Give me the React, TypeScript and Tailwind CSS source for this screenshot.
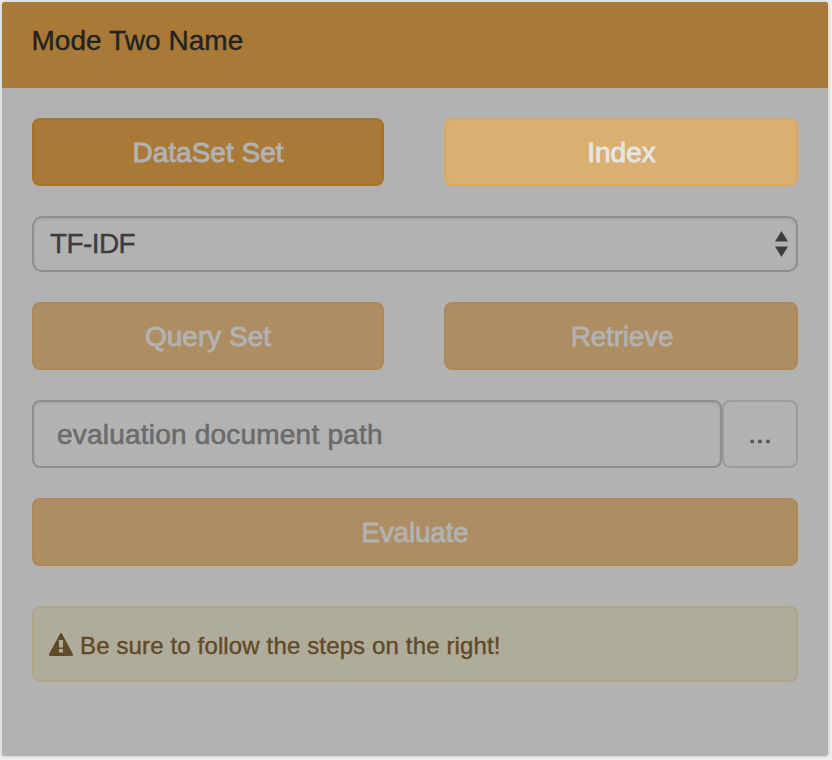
import React from "react";

type ButtonProps = { label: string; tone?: "solid" | "light" | "muted"; className?: string; labelClass?: string };

const tones = {
  solid: "bg-[#a97937] border-[#a87128] text-[#b2b2b2]",
  light: "bg-[#d9af72] border-[#dba861] text-[#e5e5e5]",
  muted: "bg-[#ad8d61] border-[#ac8957] text-[#b2b2b2]",
};

function ActionButton({ label, tone = "muted", className = "", labelClass = "" }: ButtonProps) {
  return (
    <button
      className={`flex h-[68px] items-center justify-center rounded-lg border-2 pt-0.5 text-[28px] leading-10 [-webkit-text-stroke:0.9px_currentColor] ${tones[tone]} ${className}`}
    >
      <span className={labelClass}>{label}</span>
    </button>
  );
}

export default function App() {
  return (
    <div className="h-[760px] w-[832px] bg-[#eeeeee] pt-0.5 pl-0.5 font-['Liberation_Sans',Arial,sans-serif]">
      <section className="h-[754px] w-[826px] rounded-[3px] bg-[#b2b2b2] shadow-[0_0_0_2px_#dfdfdf]">
        <header className="h-[86px] rounded-t-[3px] bg-[#a97937] px-[29.5px] pt-[19px] text-[28px] leading-10 text-[#232323]">
          <h1 className="tracking-[0.05px] [-webkit-text-stroke:0.4px_currentColor]">Mode Two Name</h1>
        </header>
        <div className="flex w-[826px] flex-col gap-[30px] pt-[30px] pr-[30px] pl-[30px]">
          <div className="flex justify-between">
            <ActionButton label="DataSet Set" tone="solid" className="w-[352px]" />
            <ActionButton label="Index" tone="light" className="w-[354px]" labelClass="pl-px" />
          </div>
          <div className="flex h-14 items-center justify-between rounded-[10px] border-2 border-[#8e8e8e] pr-2 pl-4 text-[28px] leading-10 text-[#3d3d3d] shadow-[inset_0_2px_3px_rgba(0,0,0,0.07)]">
            <span className="tracking-[-0.6px] [-webkit-text-stroke:0.4px_currentColor]">TF-IDF</span>
            <svg width="13" height="26" viewBox="0 0 13 26" fill="#3d3d3d">
              <path d="M6.5 0 13 10.5H0ZM0 15.5h13L6.5 26Z" />
            </svg>
          </div>
          <div className="flex justify-between">
            <ActionButton label="Query Set" className="w-[352px]" />
            <ActionButton label="Retrieve" className="w-[354px]" labelClass="pl-0.5 tracking-[-0.2px]" />
          </div>
          <div className="flex">
            <input
              placeholder="evaluation document path"
              className="h-[68px] w-[690px] rounded-lg border-2 border-[#8e8e8e] pt-0.5 pr-5 pl-[23px] text-[28px] leading-10 tracking-[0.21px] shadow-[inset_0_2px_3px_rgba(0,0,0,0.07)] [-webkit-text-stroke:0.6px_#6b6b6b] placeholder:text-[#6b6b6b]"
            />
            <button className="h-[68px] w-[76px] rounded-lg border-2 border-[#9c9c9c] text-[28px] leading-10 text-[#555555] [-webkit-text-stroke:0.7px_currentColor]">
              ...
            </button>
          </div>
          <ActionButton label="Evaluate" className="w-full" labelClass="tracking-[-0.2px]" />
          <div className="mt-2.5 flex h-[76px] items-center gap-[7px] rounded-lg border-2 border-[#b1a588] bg-[#b0ac9c] pl-[15px] text-[24px] text-[#614a27]">
            <svg width="24" height="23" viewBox="0 0 24 23" className="shrink-0">
              <path
                fill="#614a27"
                fillRule="evenodd"
                d="M11 .7q1-1.4 2 0L23.8 20.8Q24.4 23 22.5 23H1.5Q-.4 23 .2 20.8ZM9.8 7l.4 7.6h3.6l.4-7.6ZM10 16v3.5h4V16Z"
              />
            </svg>
            <span className="pt-[3px] tracking-[0.14px] [-webkit-text-stroke:0.4px_currentColor]">Be sure to follow the steps on the right!</span>
          </div>
        </div>
      </section>
    </div>
  );
}
